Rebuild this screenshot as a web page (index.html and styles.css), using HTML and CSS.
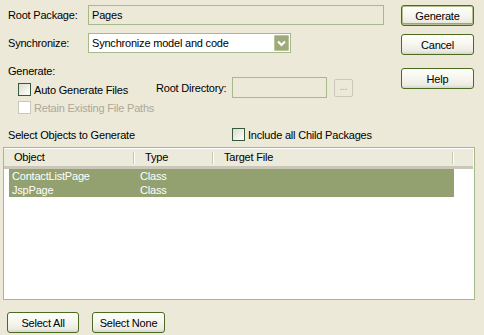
FILE: index.html
```html
<!DOCTYPE html>
<html>
<head>
<meta charset="utf-8">
<link rel="stylesheet" href="styles.css">
</head>
<body>
<div class="dlg">
  <div class="top">
    <div class="form">
      <div class="row r1">
        <span class="lbl">Root Package:</span>
        <div class="field pkg">Pages</div>
      </div>
      <div class="row r2">
        <span class="lbl">Synchronize:</span>
        <div class="select">
          <span class="sel-text">Synchronize model and code</span>
          <span class="arrow"><svg width="15" height="16" viewBox="0 0 15 16"><path d="M4 6.5 L7.5 10 L11 6.5" fill="none" stroke="#fff" stroke-width="2.2"/></svg></span>
        </div>
      </div>
      <div class="gen-lbl">Generate:</div>
      <div class="row r4">
        <label class="chk auto"><span class="box"></span>Auto Generate Files</label>
        <span class="lbl2">Root Directory:</span>
        <div class="field dir"></div>
        <span class="dots">...</span>
      </div>
      <div class="row r5">
        <label class="chk dis"><span class="box"></span>Retain Existing File Paths</label>
      </div>
    </div>
    <div class="actions">
      <button class="btn def">Generate</button>
      <button class="btn cancel">Cancel</button>
      <button class="btn help">Help</button>
    </div>
  </div>
  <div class="row r6">
    <span class="sel-lbl">Select Objects to Generate</span>
    <label class="chk"><span class="box"></span>Include all Child Packages</label>
  </div>
  <div class="list">
    <div class="hdr">
      <div class="hc c1">Object</div>
      <div class="hc c2">Type</div>
      <div class="hc c3">Target File</div>
      <div class="hc c4"></div>
    </div>
    <div class="rows">
      <div class="item"><span class="ic1">ContactListPage</span><span class="ic2">Class</span></div>
      <div class="item"><span class="ic1">JspPage</span><span class="ic2">Class</span></div>
    </div>
  </div>
  <div class="bottom">
    <button class="btn all">Select All</button>
    <button class="btn none">Select None</button>
  </div>
</div>
</body>
</html>
```
FILE: styles.css
```css
html, body {
  margin: 0;
  padding: 0;
  background: #ECE9D8;
}
body {
  width: 484px;
  height: 335px;
  overflow: hidden;
  font-family: "Liberation Sans", Arial, sans-serif;
  font-size: 11px;
  letter-spacing: -0.2px;
  color: #000;
}
.dlg {
  display: flex;
  flex-direction: column;
}
.top {
  display: flex;
  padding-top: 5px;
}
.form {
  margin-left: 8px;
  width: 376px;
  display: flex;
  flex-direction: column;
}
.row {
  display: flex;
  align-items: center;
}
.r1 { height: 20px; }
.r2 { height: 20px; margin-top: 8px; }
.lbl { width: 80px; }
.field {
  box-sizing: border-box;
  border: 1px solid #A5B98A;
  background: #ECE9D8;
  height: 20px;
  display: flex;
  align-items: center;
  padding-left: 3px;
}
.pkg { width: 296px; }
.select {
  box-sizing: border-box;
  width: 203px;
  height: 20px;
  border: 1px solid #A5B98A;
  background: #fff;
  display: flex;
  align-items: center;
  justify-content: space-between;
  padding-left: 3px;
  padding-right: 1px;
}
.arrow {
  box-sizing: border-box;
  width: 15px;
  height: 16px;
  background: #9DAA7C;
  border: 1px solid #B9C39C;
  border-radius: 1px;
  display: flex;
}
.arrow svg { display: block; margin: -1px; }
.gen-lbl {
  margin-top: 13px;
  height: 11px;
  line-height: 11px;
}
.r4 { height: 21px; }
.chk {
  display: flex;
  align-items: center;
  gap: 3px;
  height: 13px;
}
.box {
  box-sizing: border-box;
  width: 13px;
  height: 13px;
  border: 1px solid #355A3E;
  background: linear-gradient(135deg, #DCDBD0 0%, #F2F1EA 60%, #FFFFFF 100%);
}
.auto {
  margin-left: 10px;
  width: 138px;
  margin-top: 4px;
}
.lbl2 { width: 76px; }
.dir { width: 95px; height: 21px; }
.dots {
  box-sizing: border-box;
  margin-left: 7px;
  width: 19px;
  height: 18px;
  border: 1px solid #CAC8BB;
  border-radius: 2px;
  color: #ACA899;
  text-align: center;
  line-height: 13px;
  font-size: 10px;
}
.r5 { margin-top: 3px; height: 13px; }
.dis { margin-left: 10px; color: #ACA899; }
.dis .box { border-color: #CAC8BB; background: #fff; }
.actions {
  margin-left: 17px;
  width: 73px;
  display: flex;
  flex-direction: column;
}
.btn {
  box-sizing: border-box;
  width: 73px;
  height: 21px;
  border: 1px solid #4B6A22;
  border-radius: 3px;
  background: linear-gradient(#FFFFFB 0%, #F6F5EE 50%, #ECEBE3 85%, #D8D5C8 100%);
  font-family: "Liberation Sans", Arial, sans-serif;
  font-size: 11px;
  letter-spacing: -0.2px;
  color: #000;
  padding: 0;
}
.def { box-shadow: inset 0 0 0 1px #B4C08E, inset 0 -1px 0 1px #9AAA6E; }
.cancel { margin-top: 8px; }
.help { margin-top: 13px; }
.r6 {
  margin-top: 14px;
  height: 13px;
  padding-left: 8px;
}
.sel-lbl { width: 224px; }
.list {
  box-sizing: border-box;
  margin-top: 6px;
  margin-left: 3px;
  width: 472px;
  height: 153px;
  border: 1px solid #A5B98A;
  background: #fff;
  padding: 1px 1px 0 0;
}
.hdr {
  display: flex;
  height: 17px;
  background: #EBEADB;
  border-bottom: 3px solid;
  border-image: linear-gradient(#E2DECD 33%, #D6D2C2 33%, #D6D2C2 66%, #CBC7B8 66%) 3;
}
.hc {
  position: relative;
  box-sizing: border-box;
  padding-left: 10px;
  line-height: 17px;
}
.hc::after {
  content: "";
  position: absolute;
  right: 0;
  top: 3px;
  bottom: 2px;
  width: 1px;
  border-left: 1px solid #C7C5B2;
  background: #fff;
}
.c1 { width: 131px; }
.c2 { width: 79px; }
.c3 { width: 240px; }
.c4 { flex: 1; }
.c4::after { display: none; }
.rows {
  display: flex;
  flex-direction: column;
  padding-left: 5px;
}
.item {
  display: flex;
  width: 445px;
  height: 14px;
  line-height: 14px;
  background: #93A070;
  color: #fff;
}
.ic1 { width: 131px; padding-left: 3px; box-sizing: border-box; }
.bottom {
  display: flex;
  margin-top: 12px;
  margin-left: 7px;
  gap: 13px;
}
.all { width: 72px; }
```
